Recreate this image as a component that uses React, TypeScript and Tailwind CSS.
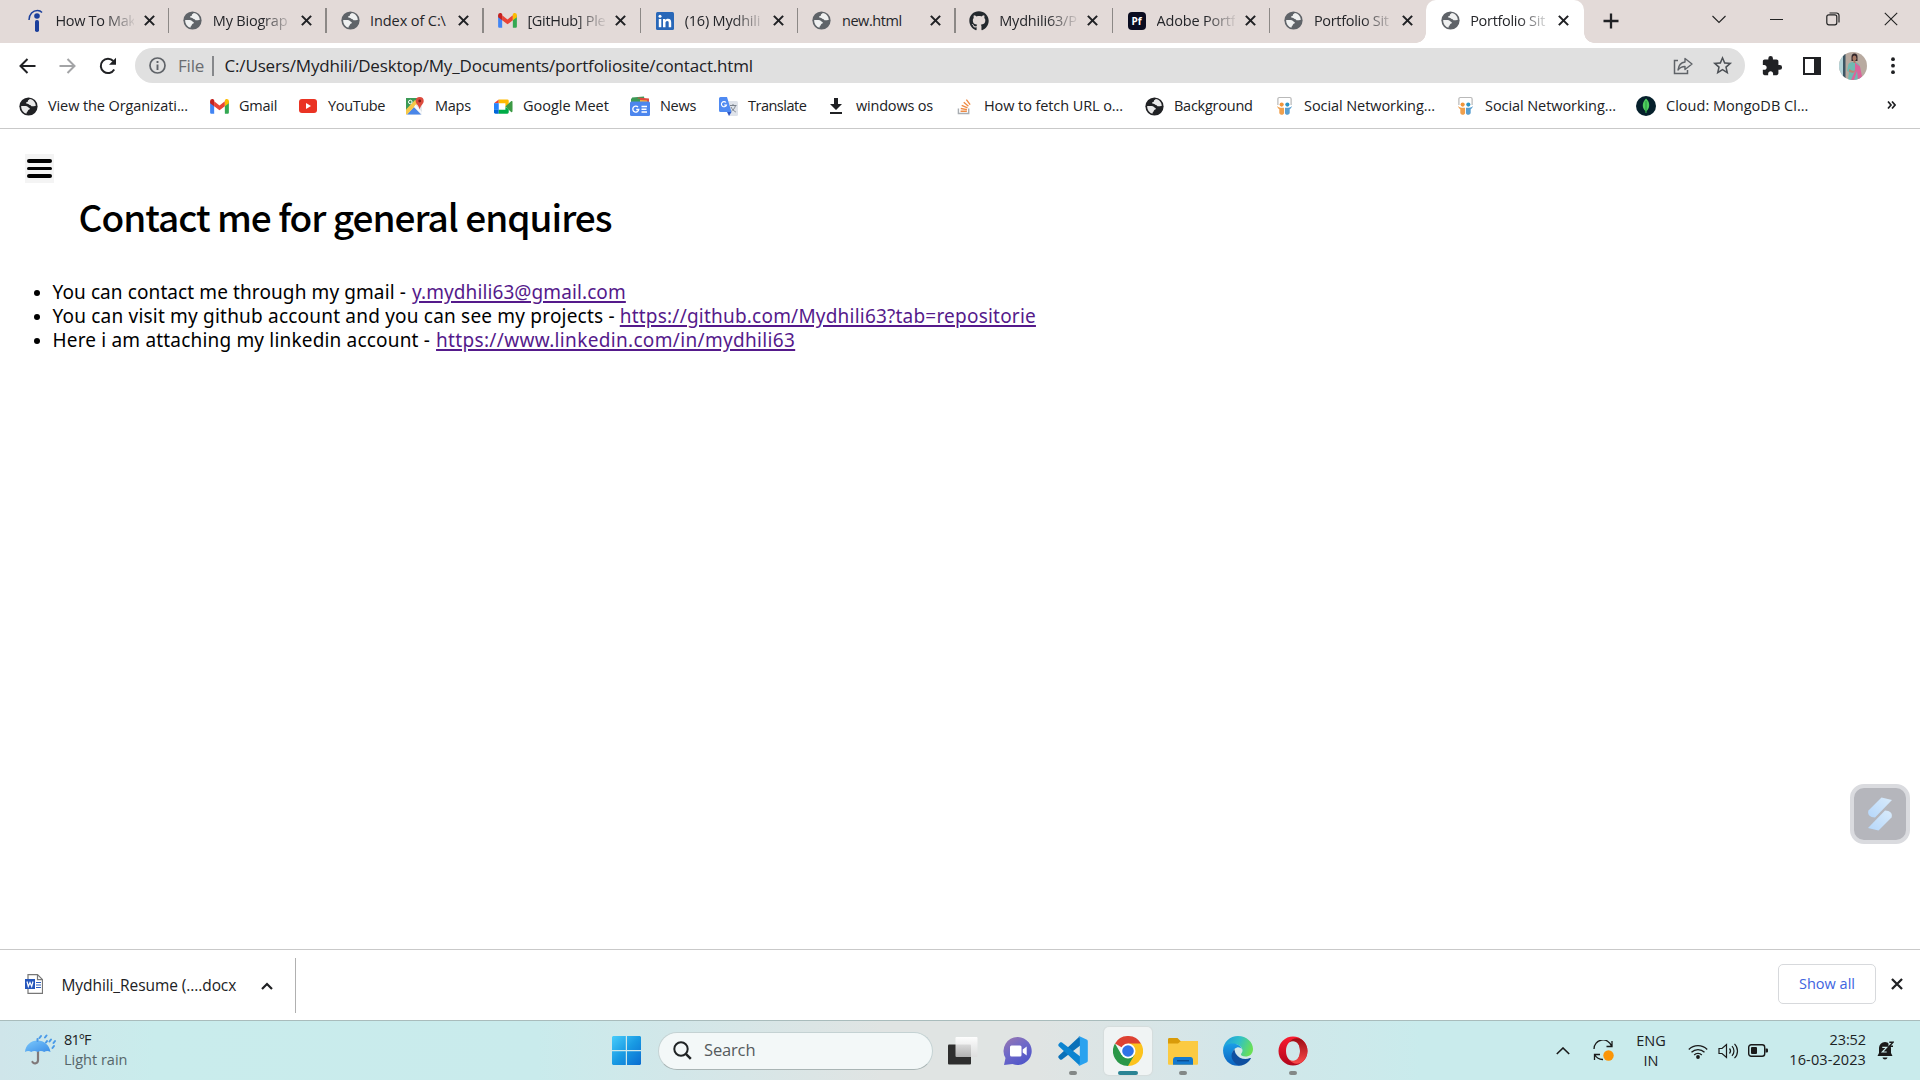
import React from 'react';
import { MdExtension, MdStarBorder } from 'react-icons/md';
import { FaGithub } from 'react-icons/fa';

function Globe({ color = '#5f6368' }: { color?: string }) {
  return (
    <svg viewBox="0 0 20 20" className="h-[19px] w-[19px]">
      <circle cx="10" cy="10" r="9.6" fill={color} />
      <path d="M11.3 2.2c-.5 1-1.9 1-1.9 2.1 0 1.2-1.4 1-1.9 1.6-.6.8.4 1.3 1.4 1.2 1.2-.1 1.4 1.2 2.6 1.2 1.3 0 1.2 1.4 2.3 1.5 1.6.1 2.6-.5 3.8-.2.2-3.6-2.5-6.8-6.3-7.400z" fill="#fff" fillOpacity=".9" />
      <path d="M2.300 9.400c2 .2 4-.3 6 .4 1.500.5 1.300 1.500 2.500 1.700.8.1.8 1.300 0 1.600-1 .3-1.400.9-1.700 1.900-.3 1-1.200.9-1.300 2.500-3.300-.9-5.700-4.200-5.500-8.100z" fill="#fff" fillOpacity=".9" />
    </svg>
  );
}

function Gmail() {
  return (
    <svg viewBox="0 0 20 16" className="h-[15px] w-[19px]">
      <path d="M0 2v12.500c0 .8.600 1.300 1.300 1.300h3V7z" fill="#4285f4" />
      <path d="M20 2v12.500c0 .8-.600 1.300-1.300 1.300h-3V7z" fill="#34a853" />
      <path d="M4.300 2.500L10 6.800l5.700-4.300v5.300L10 12 4.300 7.800z" fill="#ea4335" />
      <path d="M0 2.500C0 .3 2.200-.6 3.700.6l.6.500v6.700L0 4.600z" fill="#c5221f" />
      <path d="M20 2.500C20 .3 17.800-.6 16.300.6l-.6.500v6.700L20 4.600z" fill="#fbbc04" />
    </svg>
  );
}

function Indeed() {
  return (
    <svg viewBox="0 0 16 24" className="h-[24px] w-[16px]">
      <path d="M1 11C1 5 5 1.500 9.500 1.500c2 0 3.500.8 4.500 2" fill="none" stroke="#1b3f9c" strokeWidth="1.500" />
      <circle cx="9" cy="7" r="2.800" fill="#1b3f9c" />
      <rect x="7" y="11" width="4" height="12" rx="1.800" fill="#1b3f9c" />
    </svg>
  );
}

function Linkedin() {
  return (
    <svg viewBox="0 0 18 18" className="h-[18px] w-[18px]">
      <rect width="18" height="18" rx="1.500" fill="#2867b8" />
      <rect x="2.800" y="7" width="2.500" height="8.200" fill="#fff" />
      <circle cx="4" cy="4.200" r="1.500" fill="#fff" />
      <path d="M7 7h2.400v1.200C10 7.200 11 6.800 12 6.800c2.500 0 3.200 1.500 3.200 3.700v4.700h-2.500V11c0-1.200-.2-2.100-1.500-2.100S9.500 9.900 9.500 11v4.200H7z" fill="#fff" />
    </svg>
  );
}

function Pf() {
  return (
    <div className="flex h-[18px] w-[18px] items-center justify-center rounded-[4px] bg-[#0a0c20] font-['Open_Sans'] text-[10px] leading-none font-bold text-white">
      Pf
    </div>
  );
}

function YouTube() {
  return (
    <svg viewBox="0 0 18 14" className="h-[14px] w-[18px]">
      <rect width="18" height="14" rx="3" fill="#ea3323" />
      <path d="M7 4l5 3-5 3z" fill="#fff" />
    </svg>
  );
}

function Maps() {
  return (
    <svg viewBox="0 0 18 18" className="h-[18px] w-[18px]">
      <rect y="1" width="16" height="16.500" rx="1" fill="#e8eaed" />
      <path d="M0 1h12L1 13H0z" fill="#3c9a56" />
      <path d="M0 17.500L10 7l6 6.500v4H8z" fill="#dfe3e8" />
      <path d="M1 17.500L8 10l7 7.500z" fill="#4a86e8" />
      <path d="M0 12.500L9 3l3 3L1 17.500H0z" fill="#f6c84a" />
      <path d="M9.500 7.500L16 15v2.500L8 10z" fill="#f8fafc" />
      <path d="M13.700 0a4 4 0 0 1 4 4c0 3-3 4-4 8.500C12.700 8 9.700 7 9.700 4a4 4 0 0 1 4-4z" fill="#dd4b3e" />
      <circle cx="13.700" cy="4" r="1.400" fill="#7d1f16" />
      <circle cx="4.300" cy="5" r="1.800" fill="none" stroke="#fff" />
    </svg>
  );
}

function Meet() {
  return (
    <svg viewBox="0 0 20 17" className="h-[17px] w-[19px]">
      <path d="M5 1v4H0z" fill="#ea4335" />
      <path d="M0 5h5v7H0z" fill="#2684fc" />
      <path d="M0 12h5v4H1.500A1.500 1.500 0 0 1 0 14.500z" fill="#0066da" />
      <path d="M5 1h9a1.500 1.500 0 0 1 1.500 1.500V7L12 9V5H5z" fill="#ffba00" />
      <path d="M5 12h7V9l3.500 2v3.500A1.500 1.500 0 0 1 14 16H5z" fill="#00ac47" />
      <path d="M12 8.500L18 3c.7-.5 1.500-.2 1.500.6v10c0 .8-.8 1.100-1.500.6z" fill="#3c9a45" />
    </svg>
  );
}

function News() {
  return (
    <svg viewBox="0 0 20 20" className="h-[20px] w-[20px]">
      <path d="M2 1.500l12-1 1 6H2z" fill="#3c9a56" />
      <path d="M8 1.500l11 1v6H5z" fill="#e04a3f" />
      <path d="M1 3.500l16 1 1 4H1z" fill="#f6b93b" />
      <path d="M1 2.500h9v4H1z" fill="#3c9a56" />
      <rect y="5.500" width="20" height="14.500" rx="1.500" fill="#4c86ee" />
      <path d="M8 11a3 3 0 1 0 .8 2.500H6.200" fill="none" stroke="#fff" strokeWidth="1.300" />
      <path d="M11.500 10.500H17M11.500 13.200h5M11.500 16H17" stroke="#fff" strokeWidth="1.400" />
    </svg>
  );
}

function Translate() {
  return (
    <svg viewBox="0 0 19 19" className="h-[19px] w-[19px]">
      <path d="M7 4h10.500A1.500 1.500 0 0 1 19 5.500v12a1.500 1.500 0 0 1-1.500 1.500H10z" fill="#dfe3ea" />
      <path d="M1.500 0H8l4.500 15H1.500A1.500 1.500 0 0 1 0 13.500v-12A1.500 1.500 0 0 1 1.500 0z" fill="#4f8af2" />
      <path d="M8 15h4.500L10 19z" fill="#2f56c4" />
      <path d="M7 5.500A2.600 2.600 0 1 0 7.500 8H5.200" fill="none" stroke="#fff" strokeWidth="1.100" />
      <path d="M11 8.500h6.500M14 7v1.500M16.500 8.500c-.5 2.500-2.500 4.500-4 5.500M12 10c.8 2 3 4 4.800 5" fill="none" stroke="#7b828c" strokeWidth="1" />
    </svg>
  );
}

function Download() {
  return (
    <svg viewBox="0 0 14 16" className="h-[16px] w-[14px]">
      <path d="M5 0h4v6h4l-6 6-6-6h4zM1 14h12v2H1z" fill="#202124" />
    </svg>
  );
}

function StackOverflow() {
  return (
    <svg viewBox="0 0 16 17" className="h-[17px] w-[15px]">
      <path d="M1.500 10.500v5.500h11v-5.500" fill="none" stroke="#a9adb2" strokeWidth="1.500" />
      <path d="M3.800 13.500h6.700M4 10.600l6.600 1.200M5 7.300l6.200 2.600M7.200 4l5 4.200M10 1.200l4 5.300" stroke="#ee8b45" strokeWidth="1.500" />
    </svg>
  );
}

function SlideShare() {
  return (
    <svg viewBox="0 0 18 20" className="h-[20px] w-[17px]">
      <path d="M2 9V2.500A1.500 1.500 0 0 1 3.500 1h11A1.500 1.500 0 0 1 16 2.500V9" fill="#fff" stroke="#b9b9b9" strokeWidth="1.300" />
      <circle cx="6" cy="8.500" r="2.200" fill="#f0953a" />
      <circle cx="12" cy="8.500" r="2.200" fill="#2c93c4" />
      <path d="M1 10c2.500 2.200 5 1.800 7.500 1.800v5.700C8.500 20 4 20 3.500 17.500V13.500C2.500 13 1.500 11.500 1 10z" fill="#f0a04c" />
      <path d="M17 10c-2.500 2.200-5 1.800-7.500 1.800v5.700c0 2.500 4.500 2.500 5 0v-4c1-.5 2-2 2.500-3.500z" fill="#5a9fd0" />
    </svg>
  );
}

function Mongo() {
  return (
    <svg viewBox="0 0 20 20" className="h-[20px] w-[20px]">
      <circle cx="10" cy="10" r="10" fill="#06202c" />
      <path d="M10 2.500c2.500 2.300 3.500 4.800 3.200 7.500-.3 2.500-1.500 4-2.700 5l-.3 2h-.5l-.2-2c-1.500-1.200-2.600-2.800-2.700-5C6.600 7 7.800 5 10 2.500z" fill="#4fce5d" />
      <path d="M10 5v12" stroke="#1f8a3b" strokeWidth=".8" />
    </svg>
  );
}

function Cross({ size }: { size: 'tab' | 'bar' }) {
  return (
    <svg viewBox="0 0 10 10" className={size === 'tab' ? 'h-[11px] w-[11px]' : 'h-[12px] w-[12px]'}>
      <path d="M.8.8l8.400 8.400M9.200.8L.8 9.200" stroke="#202124" strokeWidth="1.900" />
    </svg>
  );
}

const tabs: { icon: React.ReactNode; title: string; fade: boolean; track: string }[] = [
  { icon: <Indeed />, title: 'How To Mak', fade: true, track: 'tracking-[-0.35px]' },
  { icon: <Globe />, title: 'My Biograp', fade: true, track: 'tracking-[-0.2px]' },
  { icon: <Globe />, title: 'Index of C:\\', fade: false, track: 'tracking-[-0.1px]' },
  { icon: <Gmail />, title: '[GitHub] Ple', fade: true, track: 'tracking-[-0.3px]' },
  { icon: <Linkedin />, title: '(16) Mydhili', fade: true, track: 'tracking-[-0.2px]' },
  { icon: <Globe />, title: 'new.html', fade: false, track: 'tracking-[-0.45px]' },
  { icon: <FaGithub className="h-[20px] w-[20px] text-[#24292e]" />, title: 'Mydhili63/P', fade: true, track: 'tracking-[-0.2px]' },
  { icon: <Pf />, title: 'Adobe Portf', fade: true, track: 'tracking-[-0.2px]' },
  { icon: <Globe />, title: 'Portfolio Sit', fade: true, track: 'tracking-[-0.3px]' },
];

function TabBody({ icon, title, fade, track }: { icon: React.ReactNode; title: string; fade: boolean; track: string }) {
  return (
    <>
      <span className="flex w-[20px] shrink-0 items-center justify-center">{icon}</span>
      <span
        className={
          'ml-[10px] w-[78px] shrink-0 overflow-hidden text-[14.5px] leading-5 whitespace-nowrap ' +
          track +
          (fade ? ' [mask-image:linear-gradient(to_right,black_62%,transparent_104%)]' : '')
        }
      >
        {title}
      </span>
      <span className="ml-[10px] shrink-0">
        <Cross size="tab" />
      </span>
    </>
  );
}

function TabStrip() {
  return (
    <div className="flex h-[43px] shrink-0 bg-[#e3dad8] pl-[12px] text-[#25262a]">
      {tabs.map((t, i) => (
        <div key={i} className="flex h-[41px] w-[157.3px] shrink-0 items-center pl-[13.5px]">
          <TabBody {...t} />
          {i < 8 && <span className="ml-auto h-[25px] w-[1.5px] bg-[#8c8886]" />}
        </div>
      ))}
      <div className="relative -ml-[1.5px] flex h-[43px] w-[157.5px] shrink-0 items-center rounded-t-[10px] bg-white pb-[2px] pl-[14px]">
        <TabBody icon={<Globe />} title="Portfolio Sit" fade track="tracking-[-0.3px]" />
        <span className="absolute bottom-0 -left-[10px] h-[10px] w-[10px] bg-[radial-gradient(circle_at_0_0,transparent_9.500px,white_10px)]" />
        <span className="absolute -right-[10px] bottom-0 h-[10px] w-[10px] bg-[radial-gradient(circle_at_100%_0,transparent_9.500px,white_10px)]" />
      </div>
      <svg viewBox="0 0 16 16" className="mt-[13px] ml-[19px] h-[16px] w-[16px] shrink-0">
        <path d="M8 .5v15M.5 8h15" stroke="#202124" strokeWidth="2.300" />
      </svg>
      <div className="ml-auto flex h-[37px] w-[230px] items-center justify-around pt-px">
        <svg viewBox="0 0 14 9" className="h-[9px] w-[14px]">
          <path d="M.5 1L7 7.500 13.500 1" fill="none" stroke="#222" strokeWidth="1.100" />
        </svg>
        <span className="h-[1px] w-[13px] bg-[#222]" />
        <svg viewBox="0 0 14 14" className="h-[14px] w-[14px]">
          <rect x=".8" y="2.800" width="10" height="10" rx="2" fill="none" stroke="#222" strokeWidth="1.200" />
          <path d="M3.500 1h7A2.500 2.500 0 0 1 13 3.500v7" fill="none" stroke="#222" strokeWidth="1.200" />
        </svg>
        <svg viewBox="0 0 14 14" className="h-[14px] w-[14px]">
          <path d="M.8.8l12.400 12.400M13.200.8L.8 13.200" stroke="#222" strokeWidth="1.100" />
        </svg>
      </div>
    </div>
  );
}

function Avatar() {
  return (
    <svg viewBox="0 0 28 28" className="h-[28px] w-[28px]">
      <clipPath id="face">
        <circle cx="14" cy="14" r="14" />
      </clipPath>
      <g clipPath="url(#face)">
        <rect width="28" height="28" fill="#b8aaa0" />
        <rect width="4" height="28" fill="#b4d3d8" />
        <rect x="4" width="2.500" height="28" fill="#3c5563" />
        <path d="M9 28l1-8-2-1 1.500-7c1-1.500 3-2 5-2 3 0 6 1.500 6.500 5l1 13z" fill="#6fbab2" />
        <path d="M16 10.500l5 4 2 10-4 3.500-1-9-3 9h-3l4-9z" fill="#d9659b" />
        <path d="M10 17l4 2 3-1-3 3-4-1z" fill="#b98873" />
        <path d="M12.500 5a3 3.500 0 0 1 6 0v4h-6z" fill="#33262a" />
        <ellipse cx="15.500" cy="6.300" rx="1.900" ry="2.800" fill="#a87a66" />
        <path d="M14.500 8.500h2v2.500h-2z" fill="#a87a66" />
      </g>
    </svg>
  );
}

function Toolbar() {
  return (
    <div className="flex h-[45px] shrink-0 items-center bg-white pr-[18px] pl-[19px]">
      <svg viewBox="0 0 17 16" className="h-[16px] w-[17px]">
        <path d="M16.500 8H1.500M8.500 1l-7 7 7 7" fill="none" stroke="#202124" strokeWidth="2" />
      </svg>
      <svg viewBox="0 0 17 16" className="ml-[23px] h-[16px] w-[17px]">
        <path d="M.5 8h15M8.500 1l7 7-7 7" fill="none" stroke="#a3a4a6" strokeWidth="2" />
      </svg>
      <svg viewBox="0 0 18 18" className="ml-[23px] h-[18px] w-[18px]">
        <path d="M15.200 12.500A7.200 7.200 0 1 1 14.300 4" fill="none" stroke="#202124" strokeWidth="2" />
        <path d="M17 .8v7h-7z" fill="#202124" />
      </svg>
      <div className="ml-[18px] flex h-[35px] w-[1610px] items-center rounded-full bg-[#e0e0e0] pr-[11px] pl-[14px] text-[17px]">
        <svg viewBox="0 0 17 17" className="h-[17px] w-[17px]">
          <circle cx="8.500" cy="8.500" r="7.500" fill="none" stroke="#5f6368" strokeWidth="1.700" />
          <path d="M8.500 7.500V13M8.500 4v2" stroke="#5f6368" strokeWidth="1.900" />
        </svg>
        <span className="ml-[12px] w-[34px] tracking-[-0.2px] text-[#6a6d71]">File</span>
        <span className="h-[20px] w-[1.5px] bg-[#86888b]" />
        <span className="ml-[11px] tracking-[-0.163px] text-[#202124]">C:/Users/Mydhili/Desktop/My_Documents/portfoliosite/contact.html</span>
        <svg viewBox="0 0 20 18" className="ml-auto h-[18px] w-[20px]">
          <path d="M5 3.500H1.500v13h13V13" fill="none" stroke="#5f6368" strokeWidth="1.500" />
          <path d="M12 1.500l7 5.500-7 5.500V9.500c-3 0-5 .8-7 3.500.5-4 2.500-7.500 7-8z" fill="none" stroke="#5f6368" strokeWidth="1.400" strokeLinejoin="round" />
        </svg>
        <MdStarBorder className="ml-[18px] h-[23px] w-[23px] text-[#4d5156]" />
      </div>
      <MdExtension className="ml-[16px] h-[22px] w-[22px] text-[#202124]" />
      <div className="ml-[20px] h-[18px] w-[18px] border-[2px] border-r-[7px] border-[#202124]" />
      <span className="ml-[18px]">
        <Avatar />
      </span>
      <svg viewBox="0 0 4 18" className="ml-auto h-[18px] w-[18px]">
        <circle cx="2" cy="2.200" r="1.900" fill="#202124" />
        <circle cx="2" cy="8.700" r="1.900" fill="#202124" />
        <circle cx="2" cy="15.200" r="1.900" fill="#202124" />
      </svg>
    </div>
  );
}

const bookmarks: { icon: React.ReactNode; label: string; cls: string }[] = [
  { icon: <Globe color="#202124" />, label: 'View the Organizati...', cls: 'w-[191px] tracking-[-0.1px]' },
  { icon: <Gmail />, label: 'Gmail', cls: 'w-[89px] tracking-[-0.250px]' },
  { icon: <YouTube />, label: 'YouTube', cls: 'w-[107px] tracking-[-0.35px]' },
  { icon: <Maps />, label: 'Maps', cls: 'w-[88px] tracking-[-0.25px]' },
  { icon: <Meet />, label: 'Google Meet', cls: 'w-[137px] tracking-[0px]' },
  { icon: <News />, label: 'News', cls: 'w-[88px] tracking-[-0.3px]' },
  { icon: <Translate />, label: 'Translate', cls: 'w-[108px] tracking-[-0.5px]' },
  { icon: <Download />, label: 'windows os', cls: 'w-[128px] tracking-[-0.2px]' },
  { icon: <StackOverflow />, label: 'How to fetch URL o...', cls: 'w-[190px] tracking-[-0.09px]' },
  { icon: <Globe color="#202124" />, label: 'Background', cls: 'w-[130px] tracking-[-0.25px]' },
  { icon: <SlideShare />, label: 'Social Networking...', cls: 'w-[181px] tracking-[-0.07px]' },
  { icon: <SlideShare />, label: 'Social Networking...', cls: 'w-[181px] tracking-[-0.07px]' },
  { icon: <Mongo />, label: 'Cloud: MongoDB Cl...', cls: 'w-[200px] tracking-[0.02px]' },
];

function Bookmarks() {
  return (
    <div className="flex h-[41px] shrink-0 items-start border-b border-[#c9c9c9] bg-white pr-[24px] pl-[19px] text-[14.5px] text-[#202124]">
      {bookmarks.map((b, i) => (
        <div key={i} className={'flex h-[36px] shrink-0 items-center whitespace-nowrap ' + b.cls}>
          <span className="flex w-[18px] shrink-0 items-center justify-center [&>svg]:shrink-0">{b.icon}</span>
          <span className="ml-[11px]">{b.label}</span>
        </div>
      ))}
      <svg viewBox="0 0 8 8" className="mt-[13px] ml-auto h-[8px] w-[9px]">
        <path d="M.5.5L3.500 4l-3 3.500M4.500.5l3 3.500-3 3.500" fill="none" stroke="#202124" strokeWidth="1.700" />
      </svg>
    </div>
  );
}

const contacts = [
  { text: 'You can contact me through my gmail -', cls: 'tracking-[0.1px]', link: 'y.mydhili63@gmail.com', lcls: 'tracking-[0.1px]', gap: 'ml-[6px]' },
  { text: 'You can visit my github account and you can see my projects -', cls: 'tracking-[0.2px]', link: 'https://github.com/Mydhili63?tab=repositorie', lcls: 'tracking-[0.21px]', gap: 'ml-[5px]' },
  { text: 'Here i am attaching my linkedin account -', cls: 'tracking-[0.18px]', link: 'https://www.linkedin.com/in/mydhili63', lcls: 'tracking-[0.33px]', gap: 'ml-[6px]' },
];

function Page() {
  return (
    <main className="relative flex h-[820px] shrink-0 flex-col bg-white text-black">
      <div className="mt-[25px] ml-[25px] flex h-[29px] w-[29px] flex-col items-center justify-center gap-[4px] bg-[#f4f4f4]">
        <span className="h-[3.5px] w-[25px] rounded-full bg-black" />
        <span className="h-[3.5px] w-[25px] rounded-full bg-black" />
        <span className="h-[3.5px] w-[25px] rounded-full bg-black" />
      </div>
      <h1 className="mt-[6px] ml-[78.5px] h-[54px] font-['Noto_Sans_CJK_SC',sans-serif] text-[37px] leading-[54px] font-medium tracking-[-1px]">
        Contact me for general enquires
      </h1>
      <ul className="mt-[37px] flex flex-col font-['Noto_Sans',sans-serif] text-[19px]">
        {contacts.map((c) => (
          <li key={c.link} className="flex h-[24px] items-center pl-[34px] leading-[24px]">
            <span className="mt-[2px] h-[6px] w-[6px] rounded-full bg-black" />
            <span className={'ml-[12.5px] ' + c.cls}>{c.text}</span>
            <a className={'text-[#551a8b] underline decoration-[1.5px] underline-offset-[2px] ' + c.gap + ' ' + c.lcls}>{c.link}</a>
          </li>
        ))}
      </ul>
      <div className="absolute top-[655px] right-[10px] flex h-[60px] w-[60px] items-center justify-center rounded-[14px] border-[4px] border-[#dadbdf] bg-[#b5b6bc]">
        <svg viewBox="0 0 26 34" className="h-[34px] w-[26px]">
          <defs>
            <linearGradient id="sa" x1="0" y1="1" x2="1" y2="0">
              <stop offset="0" stopColor="#b5d7fb" />
              <stop offset="1" stopColor="#d9ebfb" />
            </linearGradient>
          </defs>
          <path d="M14.500 0.500l10.500 2.500L8 20.500C3 20.500 0 17.500 1.500 13.500z" fill="url(#sa)" />
          <path d="M11.500 33.500L1 31l17-17.500c5 0 8 3 6.500 7z" fill="url(#sa)" />
        </svg>
      </div>
    </main>
  );
}

function DownloadBar() {
  return (
    <div className="flex h-[71px] shrink-0 border-t border-[#c9c9c9] bg-white text-[#202124]">
      <div className="flex h-[71px] w-[295px] items-center pl-[25px]">
        <svg viewBox="0 0 18 20" className="-mt-[3px] h-[20px] w-[18px]">
          <path d="M3 .7h9.500l5 5v13.600H3z" fill="#fff" stroke="#777" strokeWidth="1.200" />
          <path d="M12.500.7v5h5" fill="none" stroke="#777" strokeWidth="1.200" />
          <path d="M11 8.500h5M11 11h5M11 13.500h5" stroke="#2b5fc0" strokeWidth="1.100" />
          <rect y="5" width="10" height="10" fill="#2456bc" />
          <path d="M2 7.500l1.300 5L5 8.500l1.700 4L8 7.500" fill="none" stroke="#fff" strokeWidth="1.200" />
        </svg>
        <span className="ml-[18.5px] w-[180px] text-[15.5px] tracking-[-0.08px]">Mydhili_Resume (....docx</span>
        <svg viewBox="0 0 12 8" className="ml-[19px] h-[8px] w-[12px]">
          <path d="M1 7l5-5 5 5" fill="none" stroke="#202124" strokeWidth="2.200" />
        </svg>
      </div>
      <span className="mt-[8px] h-[55px] w-px bg-[#b0b0b0]" />
      <div className="mt-[14px] mr-[17px] ml-auto flex h-[40px] items-center">
        <span className="flex h-[40px] w-[98px] items-center justify-center rounded-[5px] border border-[#d7d9dc] text-[14.5px] text-[#4064e0]">
          Show all
        </span>
        <span className="ml-[15px]">
          <Cross size="bar" />
        </span>
      </div>
    </div>
  );
}

function Windows() {
  return (
    <svg viewBox="0 0 29 29" className="h-[29px] w-[29px]">
      <defs>
        <linearGradient id="win" x1="0" y1="0" x2="29" y2="29" gradientUnits="userSpaceOnUse">
          <stop offset="0" stopColor="#49cdfb" />
          <stop offset=".5" stopColor="#189ae3" />
          <stop offset="1" stopColor="#0a6cd0" />
        </linearGradient>
      </defs>
      <path d="M1 0h12.800v14H0V1zM15 0h13l1 1v13H15zM0 15.200h13.800V29H1l-1-1zM15 15.200h14V28l-1 1H15z" fill="url(#win)" />
    </svg>
  );
}

function TaskView() {
  return (
    <svg viewBox="0 0 30 30" className="h-[30px] w-[30px]">
      <defs>
        <linearGradient id="tv" x1="0" y1="0" x2="0" y2="1">
          <stop offset="0" stopColor="#fff" stopOpacity=".95" />
          <stop offset="1" stopColor="#ddd" stopOpacity=".75" />
        </linearGradient>
      </defs>
      <rect x="0" y="8.500" width="23" height="20" rx="1" fill="#2e2e2e" />
      <rect x="7.500" y="1" width="22" height="20" rx="1" fill="url(#tv)" />
    </svg>
  );
}

function Chat() {
  return (
    <svg viewBox="0 0 30 30" className="h-[30px] w-[30px]">
      <defs>
        <linearGradient id="ch" x1="0" y1="0" x2=".6" y2="1">
          <stop offset="0" stopColor="#9c78ad" />
          <stop offset=".5" stopColor="#7069c8" />
          <stop offset="1" stopColor="#5257c9" />
        </linearGradient>
      </defs>
      <path d="M15 1a14 14 0 1 1-5.500 27L1 29l1.500-7A14 14 0 0 1 15 1z" fill="url(#ch)" />
      <rect x="7" y="9.500" width="11.500" height="11" rx="1.500" fill="#fff" />
      <path d="M19.700 13.500l4-3v9l-4-3z" fill="#fff" />
    </svg>
  );
}

function VSCode() {
  return (
    <svg viewBox="0 0 30 30" className="h-[30px] w-[30px]">
      <path d="M1 19.500L21.500.5l2 8L4 23.500c-.8.500-1.500.4-2-.1l-1.300-1.300c-.6-.7-.5-1.900.3-2.600z" fill="#0a70b8" />
      <path d="M1 10.500L21.500 29.500l2-8L4 6.500c-.8-.5-1.500-.4-2 .1L.7 7.900C.1 8.600.2 9.800 1 10.500z" fill="#0c84d1" />
      <path d="M21.500.3l7 3.200c.9.400 1.300 1 1.300 2v19c0 1-.4 1.600-1.300 2l-7 3.200c-.8.300-1.300 0-1.800-.4.8.6 2.100 0 2.100-1.300V2c0-1.300-1.300-1.900-2.100-1.300.5-.4 1-.7 1.800-.4z" fill="#2aa2ef" />
    </svg>
  );
}

function Chrome() {
  return (
    <svg viewBox="0 0 30 30" className="h-[30px] w-[30px]">
      <path d="M15 15L2 7.500A15 15 0 0 1 28 7.500z" fill="#dd4132" />
      <path d="M15 15V7.500h13A15 15 0 0 1 15 30z" fill="#fcc31e" />
      <path d="M2 7.500A15 15 0 0 0 15 30l6.500-11.250L15 15 8.500 18.750z" fill="#2a9748" />
      <circle cx="15" cy="15" r="7.500" fill="#fff" />
      <circle cx="15" cy="15" r="5.800" fill="#2f73e8" />
    </svg>
  );
}

function Folder() {
  return (
    <svg viewBox="0 0 30 30" className="h-[30px] w-[30px]">
      <path d="M0 3.500C0 2.500.5 2 1.500 2h8l3 3H28.500c1 0 1.500.500 1.500 1.500V12H0z" fill="#d99b09" />
      <path d="M0 7.500h10l3-2.500h17v22.500c0 .800-.500 1.300-1.300 1.300H1.300C.5 28.800 0 28.300 0 27.500z" fill="#fbca42" />
      <path d="M5 28.800v-5c0-1.500 1-2.800 2.500-2.800h15c1.500 0 2.500 1.300 2.500 2.800v5z" fill="#1379cf" />
      <path d="M9 24.700h12" stroke="#0b4f94" strokeWidth="1.400" />
    </svg>
  );
}

function Edge() {
  return (
    <svg viewBox="0 0 30 30" className="h-[30px] w-[30px]">
      <defs>
        <linearGradient id="eg" x1="0" y1=".2" x2="1" y2=".5">
          <stop offset="0" stopColor="#1d9be0" />
          <stop offset=".5" stopColor="#2fc0c8" />
          <stop offset="1" stopColor="#6ae055" />
        </linearGradient>
        <linearGradient id="eb" x1="0" y1="0" x2="0" y2="1">
          <stop offset="0" stopColor="#1a9de6" />
          <stop offset="1" stopColor="#0b62c0" />
        </linearGradient>
      </defs>
      <path d="M0 14C.5 6 7 0 15 0c8.500 0 15 6 15 13 0 5-3.500 7.500-7.500 7.500-3 0-5-1-4.500-2.500.3-.7 1.500-1.500 1.500-3.500C19.500 11 15.500 8 11 8 5 8 1 11 0 14z" fill="url(#eg)" />
      <path d="M0 14c1-4.500 5-6.500 9.500-6.500 5 0 8.500 2.500 9.500 6-1-1.700-3-2.500-5-2-3.500 1-5 4-4.500 8 .5 5 4.500 9.500 9 10C8 31.500 0 24.500 0 14z" fill="url(#eb)" />
      <path d="M11.500 13c-3 3-4 7.500-1.500 11.500 2 3.500 5 5.500 8.500 5 4-.8 7.300-3.300 9.300-6.700.3-.6-.2-1-.8-.7-5 2.300-11.500.4-14-4-.8-1.500-1.500-3.500-1.500-5.100z" fill="#0f4fa0" />
    </svg>
  );
}

function Opera() {
  return (
    <svg viewBox="0 0 30 30" className="h-[30px] w-[30px]">
      <defs>
        <linearGradient id="op" x1="0" y1="0" x2="0" y2="1">
          <stop offset="0" stopColor="#fb1c30" />
          <stop offset="1" stopColor="#b0061c" />
        </linearGradient>
        <linearGradient id="oq" x1="0" y1="0" x2="0" y2="1">
          <stop offset="0" stopColor="#9c0c14" />
          <stop offset="1" stopColor="#fb4a4a" />
        </linearGradient>
      </defs>
      <path fillRule="evenodd" d="M15 .5a14.500 14.500 0 1 1 0 29 14.500 14.500 0 0 1 0-29zM15.500 4.500c-4 0-7.500 4.500-7.500 10.500s3.500 10.500 7.500 10.500S22 21 22 15 19.500 4.500 15.500 4.500z" fill="url(#op)" />
      <path d="M11 6.500c3-4 8-5.500 13-2.800a14.500 14.500 0 0 1 0 22.600c-5 2.700-10 1.200-13-2.800 6 3.500 11-1 11-8.500S17 3 11 6.500z" fill="url(#oq)" />
    </svg>
  );
}

const apps = [
  { icon: <TaskView />, mark: '', tile: '' },
  { icon: <Chat />, mark: '', tile: '' },
  { icon: <VSCode />, mark: 'w-[8px] bg-[#838887]', tile: '' },
  { icon: <Chrome />, mark: 'w-[20px] bg-[#2a8494]', tile: 'bg-[#f0f4f4] shadow-[0_0_1px_1px_#d5dcdc]' },
  { icon: <Folder />, mark: 'w-[8px] bg-[#838887]', tile: '' },
  { icon: <Edge />, mark: '', tile: '' },
  { icon: <Opera />, mark: 'w-[8px] bg-[#838887]', tile: '' },
];

function Taskbar() {
  return (
    <div className="flex h-[60px] shrink-0 border-t border-[#a9bcbc] bg-[linear-gradient(90deg,#cfe5ea_0%,#c9ecec_8%,#c9ebec_28%,#d2e7e9_35%,#e0e4e3_46%,#e0e4e3_54%,#d3e6e9_64%,#c9ebec_74%,#c9ebec_100%)] text-[15px] text-[#1c2224]">
      <div className="flex w-[612px] items-start pt-[12px] pl-[25px]">
        <svg viewBox="0 0 31 32" className="h-[32px] w-[31px]">
          <defs>
            <linearGradient id="um" x1="0" y1="0" x2="1" y2="1">
              <stop offset="0" stopColor="#7cc8fb" />
              <stop offset="1" stopColor="#3a8ee8" />
            </linearGradient>
          </defs>
          <path d="M13 15v12.500a3 3 0 0 1-5.500 1.500" fill="none" stroke="#80797a" strokeWidth="2.200" strokeLinecap="round" />
          <path d="M0 19C.5 12 6 7.500 12.500 7.500S24.500 12 25.500 19c-2-1.200-4.500-1.200-6.300 0-1.900-1.200-4.700-1.200-6.500 0-1.900-1.200-4.700-1.200-6.500 0-1.700-1.200-4.200-1.200-6.200 0z" fill="url(#um)" />
          <path d="M12.500 6v2M16 3L14.500 5M21.500 2.500l-1.500 2M26 6.500l-1.500 2M22 8l-1 1.500M30 8l-1.500 2M29 13l-1.500 2" stroke="#4a9ae8" strokeWidth="2" strokeLinecap="round" />
        </svg>
        <div className="ml-[8px] flex flex-col leading-[20px]">
          <span className="-mt-[3px] text-[14.5px] tracking-[-0.9px]">81°F</span>
          <span className="text-[14.5px] text-[#55666a]">Light rain</span>
        </div>
      </div>
      <div className="flex items-center">
        <Windows />
        <div className="ml-[17px] flex h-[38px] w-[275px] items-center rounded-full border border-[#c4d2d3] border-b-[#a9b5b5] bg-[#f3f8f8] pl-[14px]">
          <svg viewBox="0 0 19 19" className="h-[19px] w-[19px]">
            <circle cx="8" cy="8" r="6.700" fill="none" stroke="#1f2324" strokeWidth="2" />
            <path d="M12.800 12.800l5 5" stroke="#1f2324" strokeWidth="2.500" />
          </svg>
          <span className="ml-[12px] text-[16.5px] tracking-[-0.15px] text-[#555b5d]">Search</span>
        </div>
        <div className="ml-[2.500px] flex">
          {apps.map((a, i) => (
            <div key={i} className="flex w-[55px] justify-center">
              <div className={'flex h-[48px] w-[48px] flex-col items-center rounded-[5px] pt-[9px] ' + a.tile}>
                {a.icon}
                {a.mark && <span className={'mt-[5px] h-[4px] rounded-full ' + a.mark} />}
              </div>
            </div>
          ))}
        </div>
      </div>
      <div className="ml-auto flex items-center pr-[26px]">
        <svg viewBox="0 0 14 8" className="h-[8px] w-[14px]">
          <path d="M.8 7L7 1l6.200 6" fill="none" stroke="#1a1a1a" strokeWidth="1.600" />
        </svg>
        <svg viewBox="0 0 21 21" className="ml-[23px] h-[21px] w-[21px]">
          <path d="M1 9A9 9 0 0 1 18.500 6M19 1v5.500h-5.500M1.500 20v-5.500H7M1.800 14.800A9 9 0 0 0 10 19.500" fill="none" stroke="#1a1a1a" strokeWidth="1.300" />
          <circle cx="15.500" cy="15.500" r="5.200" fill="#fb9508" />
        </svg>
        <div className="ml-[21px] flex w-[32px] flex-col items-center text-[14.5px] leading-[20px]">
          <span>ENG</span>
          <span>IN</span>
        </div>
        <svg viewBox="0 0 20 16" className="ml-[21px] h-[16px] w-[20px]">
          <path d="M.8 6.500a13 13 0 0 1 18.400 0M3.500 9.300a9.200 9.200 0 0 1 13 0M6.200 12a5.400 5.400 0 0 1 7.600 0" fill="none" stroke="#1a1a1a" strokeWidth="1.300" />
          <circle cx="10" cy="14" r="1.900" fill="#1a1a1a" />
        </svg>
        <svg viewBox="0 0 21 18" className="ml-[10px] h-[18px] w-[21px]">
          <path d="M1 6.500v5h3l4.500 4V2.500L4 6.500zM11.500 6.500c1.300 1.500 1.300 3.500 0 5M14 4.200c2.600 2.600 2.600 7 0 9.600M16.500 1.800c4 4 4 10.400 0 14.400" fill="none" stroke="#1a1a1a" strokeWidth="1.200" />
        </svg>
        <svg viewBox="0 0 20 13" className="ml-[9px] h-[13px] w-[20px]">
          <rect x=".7" y=".7" width="16" height="11.600" rx="2.500" fill="none" stroke="#1a1a1a" strokeWidth="1.400" />
          <rect x="3" y="3" width="6" height="7" rx="1" fill="#1a1a1a" />
          <path d="M17.500 4.500h1.500q1 0 1 1v2q0 1-1 1h-1.500z" fill="#1a1a1a" />
        </svg>
        <div className="ml-[18px] flex w-[80px] flex-col items-end text-[14.5px] leading-[20px]">
          <span className="-mt-px tracking-[-0.1px]">23:52</span>
          <span className="tracking-[0.1px]">16-03-2023</span>
        </div>
        <svg viewBox="0 0 17 19" className="ml-[11px] h-[19px] w-[17px]">
          <path d="M2 7a6 6 0 0 1 12 0v5l1.500 3H.5L2 12zM5.500 16.500h5c-.5 2.500-4.500 2.500-5 0z" fill="#1a1a1a" />
          <path d="M5.300 6.300h4.400L5.300 11h4.400" fill="none" stroke="#cdecec" strokeWidth="1.200" />
          <rect x="11.500" y="0" width="5.500" height="6" fill="#c9ebec" />
          <path d="M12.300 1.200h3.700l-3.700 4h3.700" fill="none" stroke="#1a1a1a" strokeWidth="1.400" />
        </svg>
      </div>
    </div>
  );
}

export default function App() {
  return (
    <div className="flex h-[1080px] w-[1920px] flex-col overflow-hidden bg-white font-['Open_Sans',sans-serif]">
      <TabStrip />
      <Toolbar />
      <Bookmarks />
      <Page />
      <DownloadBar />
      <Taskbar />
    </div>
  );
}
